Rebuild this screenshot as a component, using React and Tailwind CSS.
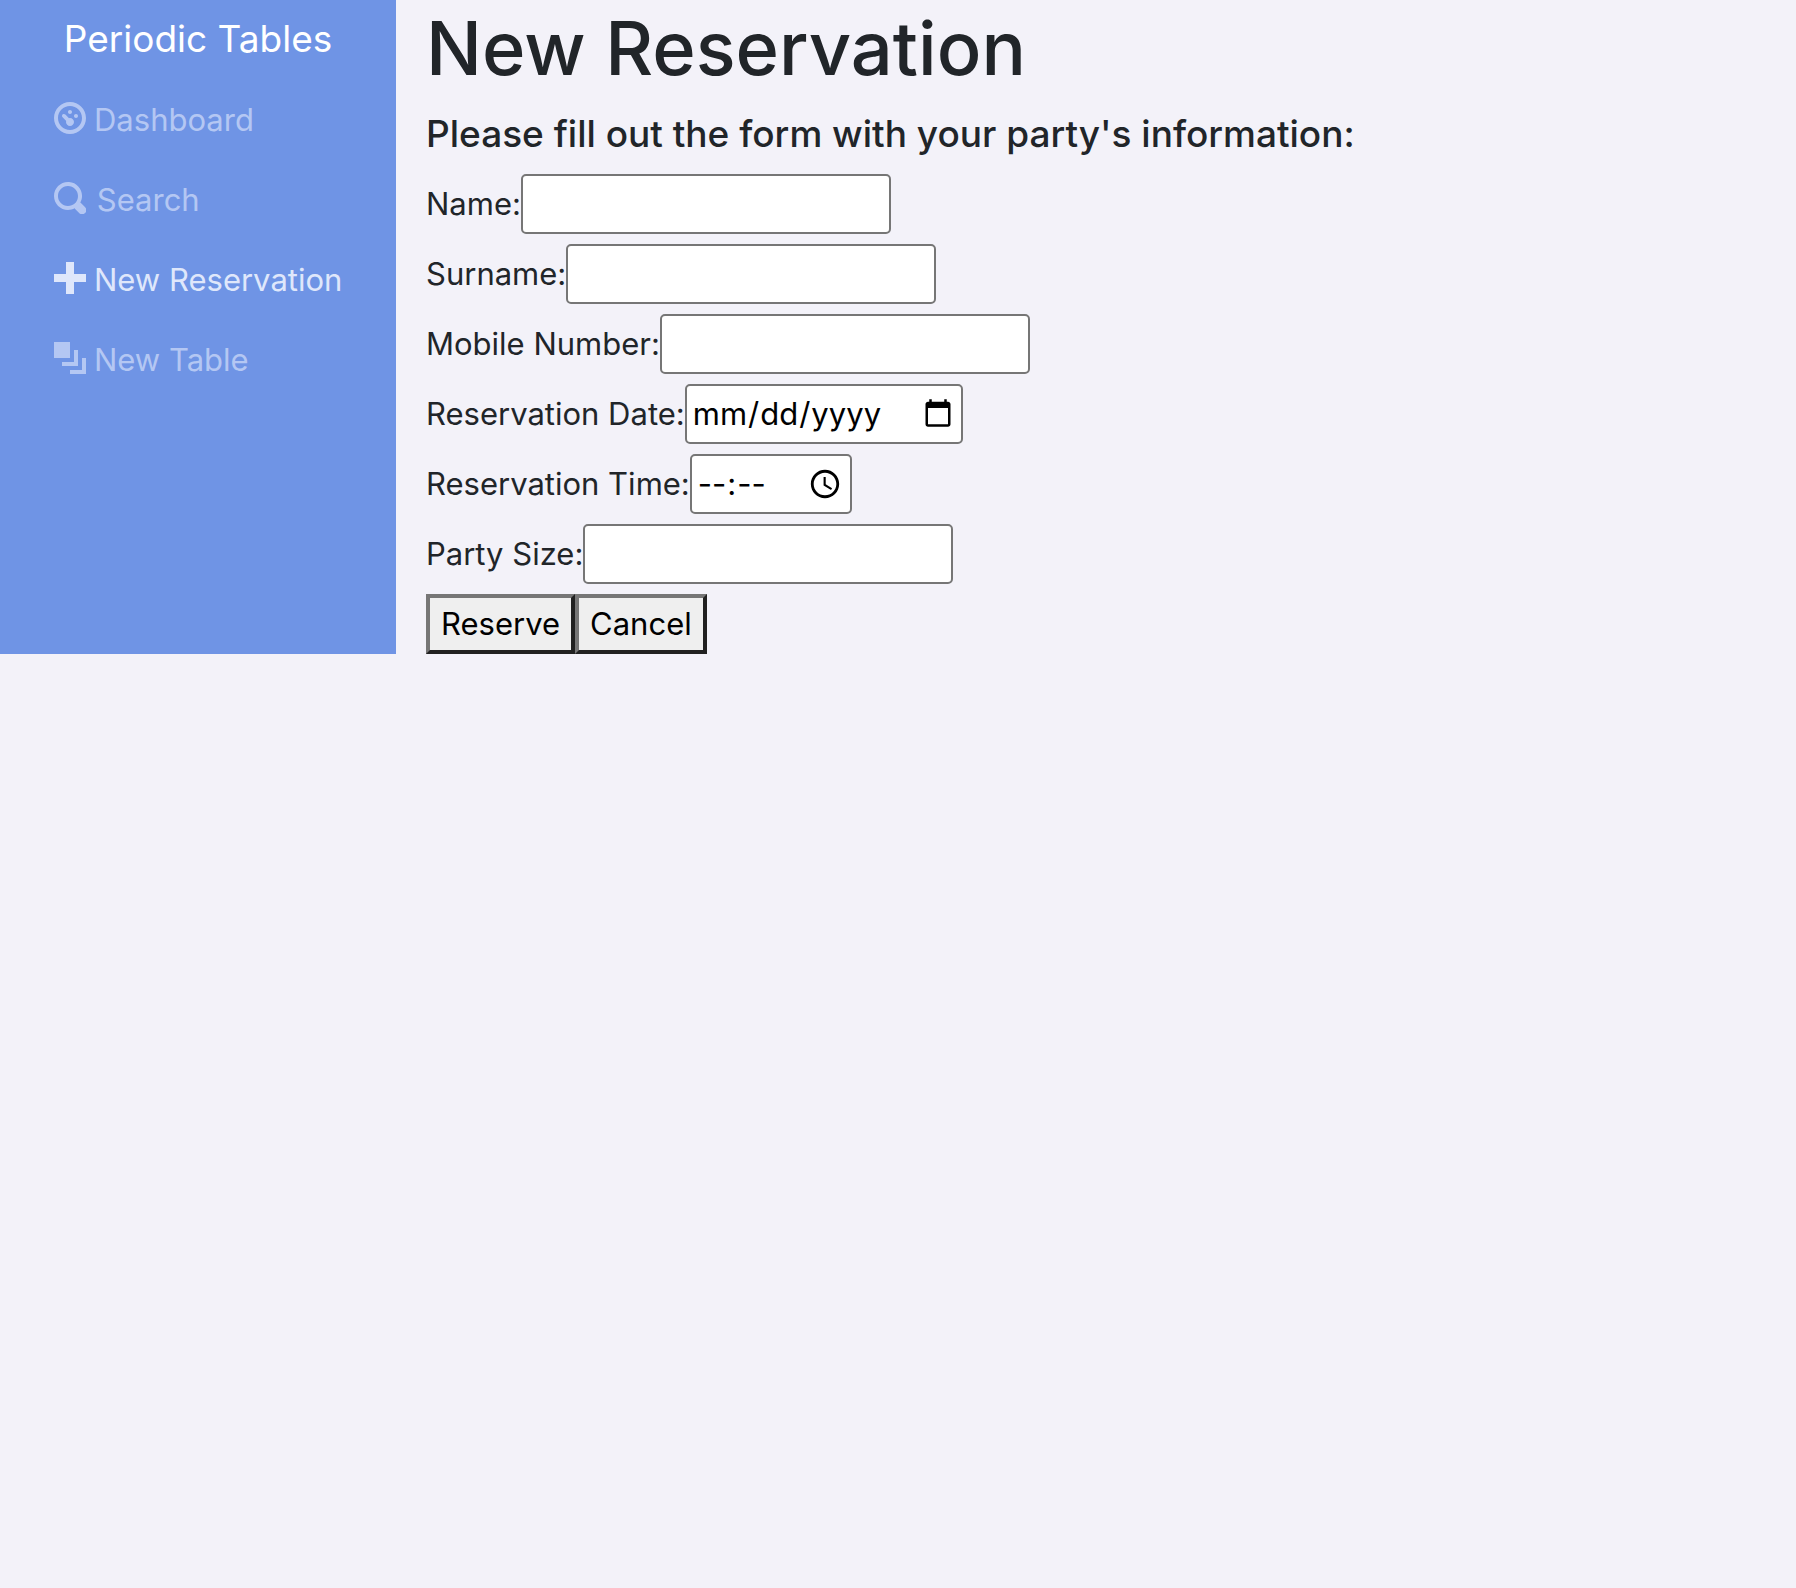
const ICONS = {
  dashboard:
    "M4 0c-2.2 0-4 1.8-4 4s1.8 4 4 4 4-1.8 4-4-1.8-4-4-4zm0 1c1.66 0 3 1.34 3 3s-1.34 3-3 3-3-1.34-3-3 1.34-3 3-3zm0 1c-.28 0-.5.22-.5.5s.22.5.5.5.5-.22.5-.5-.22-.5-.5-.5zm-1.66 1a.5.5 0 0 0-.19.84l.91.91c-.02.08-.06.16-.06.25 0 .55.45 1 1 1s1-.45 1-1-.45-1-1-1c-.09 0-.17.04-.25.06l-.91-.91a.5.5 0 0 0-.44-.16.5.5 0 0 0-.06 0zm3.16 0c-.28 0-.5.22-.5.5s.22.5.5.5.5-.22.5-.5-.22-.5-.5-.5z",
  search:
    "M3.5 0c-1.93 0-3.5 1.57-3.5 3.5s1.57 3.5 3.5 3.5c.59 0 1.17-.14 1.66-.41a1 1 0 0 0 .13.13l1 1a1.02 1.02 0 1 0 1.44-1.44l-1-1a1 1 0 0 0-.16-.13c.27-.49.44-1.06.44-1.66 0-1.93-1.55-3.5-3.5-3.5zm0 1c1.39 0 2.5 1.11 2.5 2.5 0 .66-.24 1.27-.66 1.72-.01.01-.02.02-.03.03a1 1 0 0 0-.13.13c-.44.4-1.04.63-1.69.63-1.39 0-2.5-1.11-2.5-2.5s1.11-2.5 2.5-2.5z",
  plus: "M3 0v3h-3v2h3v3h2v-3h3v-2h-3v-3h-2z",
  layers: "M0 0v4h4v-4h-4zm5 2v3h-3v1h4v-4h-1zm2 2v3h-3v1h4v-4h-1z",
};

function NavLink({ icon, active, children }) {
  return (
    <li>
      <a
        href="#"
        className={`flex h-20 items-center gap-2 ${active ? "text-[#dfe7fb]" : "text-[#b4c7f3]"}`}
      >
        <svg viewBox="0 0 8 8" className="mb-1 size-8 shrink-0" fill="currentColor" aria-hidden="true">
          <path d={ICONS[icon]} />
        </svg>
        <span className="whitespace-nowrap">{children}</span>
      </a>
    </li>
  );
}

const FIELD =
  "h-[60px] rounded-[5px] border-2 border-[#767676] bg-white px-[5px] text-black [&::-webkit-calendar-picker-indicator]:text-[32px]";

function Field({ id, label, type = "text", className = "w-[370px]" }) {
  return (
    <div className="flex items-center">
      <label htmlFor={id} className="whitespace-nowrap">{label}</label>
      <input id={id} name={id} type={type} className={`${FIELD} ${className}`} />
    </div>
  );
}

const BUTTON =
  "h-[60px] border-4 border-t-[#767676] border-l-[#767676] border-r-[#212121] border-b-[#212121] bg-[#efefef] px-[11px] text-black";

export default function App() {
  return (
    <div className="min-h-screen bg-[#f3f2f9] font-['Inter',sans-serif] text-[31px] leading-[48px] text-[#212529]">
      <div className="flex">
        <nav className="w-[396px] shrink-0 bg-[#6f94e5]">
          <a href="#" className="flex h-20 items-center justify-center pb-0.5 text-[37px] text-white">
            Periodic Tables
          </a>
          <ul className="pl-[54px]">
            <NavLink icon="dashboard">Dashboard</NavLink>
            <NavLink icon="search">&#8202;Search</NavLink>
            <NavLink icon="plus" active>New Reservation</NavLink>
            <NavLink icon="layers">New Table</NavLink>
          </ul>
        </nav>
        <main className="min-w-0 flex-1 pl-[30px]">
          <h1 className="text-[74px] leading-[96px] font-medium">New Reservation</h1>
          <h2 className="mt-[14px] text-[37px] leading-[48px] font-medium">
            Please fill out the form with your party's information:
          </h2>
          <form className="mt-4 flex flex-col gap-[10px]" onSubmit={(e) => e.preventDefault()}>
            <Field id="first_name" label="Name:" />
            <Field id="last_name" label="Surname:" />
            <Field id="mobile_number" label="Mobile Number:" type="tel" />
            <Field id="reservation_date" label="Reservation Date:" type="date" className="w-[278px]" />
            <Field
              id="reservation_time"
              label="Reservation Time:"
              type="time"
              className="w-[162px] [&::-webkit-datetime-edit-ampm-field]:hidden"
            />
            <Field id="people" label="Party Size:" />
            <div className="flex">
              <button type="submit" className={BUTTON}>Reserve</button>
              <button type="button" className={BUTTON}>Cancel</button>
            </div>
          </form>
        </main>
      </div>
    </div>
  );
}
